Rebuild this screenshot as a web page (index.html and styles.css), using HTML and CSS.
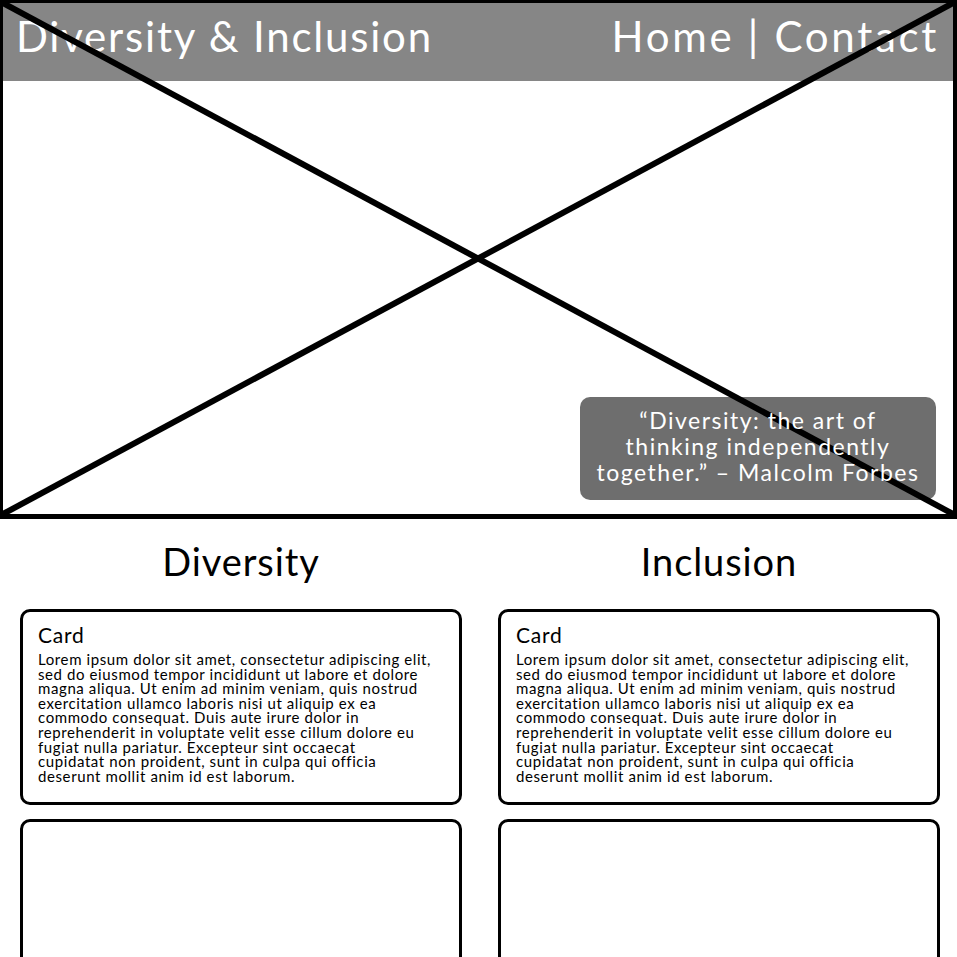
FILE: index.html
```html
<!DOCTYPE html>
<html lang="en">
<head>
<meta charset="UTF-8">
<meta name="viewport" content="width=device-width, initial-scale=1.0">
<title>Diversity &amp; Inclusion</title>
<link rel="stylesheet" href="styles.css">
</head>
<body>

<div class="hero">
    <header class="topbar">
        <span class="brand">Diversity &amp; Inclusion</span>
        <nav class="nav">Home | Contact</nav>
    </header>
    <div class="hero-body">
        <div class="quote">“Diversity: the art of thinking independently together.” – Malcolm Forbes</div>
    </div>
    <!-- image placeholder cross -->
    <svg class="placeholder-x" viewBox="0 0 100 100" preserveAspectRatio="none">
        <line x1="0" y1="0" x2="100" y2="100" />
        <line x1="100" y1="0" x2="0" y2="100" />
    </svg>
</div>

<div class="columns">
    <div class="column">
        <h2>Diversity</h2>
        <div class="card">
            <h3>Card</h3>
            <p>Lorem ipsum dolor sit amet, consectetur adipiscing elit,<br>
            sed do eiusmod tempor incididunt ut labore et dolore<br>
            magna aliqua. Ut enim ad minim veniam, quis nostrud<br>
            exercitation ullamco laboris nisi ut aliquip ex ea<br>
            commodo consequat. Duis aute irure dolor in<br>
            reprehenderit in voluptate velit esse cillum dolore eu<br>
            fugiat nulla pariatur. Excepteur sint occaecat<br>
            cupidatat non proident, sunt in culpa qui officia<br>
            deserunt mollit anim id est laborum.</p>
        </div>
        <div class="card empty"></div>
    </div>
    <div class="column">
        <h2>Inclusion</h2>
        <div class="card">
            <h3>Card</h3>
            <p>Lorem ipsum dolor sit amet, consectetur adipiscing elit,<br>
            sed do eiusmod tempor incididunt ut labore et dolore<br>
            magna aliqua. Ut enim ad minim veniam, quis nostrud<br>
            exercitation ullamco laboris nisi ut aliquip ex ea<br>
            commodo consequat. Duis aute irure dolor in<br>
            reprehenderit in voluptate velit esse cillum dolore eu<br>
            fugiat nulla pariatur. Excepteur sint occaecat<br>
            cupidatat non proident, sunt in culpa qui officia<br>
            deserunt mollit anim id est laborum.</p>
        </div>
        <div class="card empty"></div>
    </div>
</div>

</body>
</html>
```

FILE: styles.css
```css
body {
    font-family: Lato, "Open Sans", sans-serif;
    margin: 0;
    padding: 0;
    color: #000;
    background-color: white;
}

.hero {
    position: relative;
    height: 519px;
    box-sizing: border-box;
    border: solid #000;
    border-width: 3px 4px 5px 3px;
    display: flex;
    flex-direction: column;
}

.topbar {
    display: flex;
    justify-content: space-between;
    align-items: flex-start;
    height: 78px;
    box-sizing: border-box;
    padding: 9px 14px 0 13px;
    background-color: #868686;
    color: white;
    font-size: 42px;
    line-height: 48px;
}

.brand {
    letter-spacing: 1.8px;
}

.nav {
    letter-spacing: 2.7px;
}

.hero-body {
    flex: 1;
    display: flex;
    justify-content: flex-end;
    align-items: flex-end;
    padding: 0 17px 14px 0;
}

.placeholder-x {
    position: absolute;
    top: 0;
    left: 0;
    width: 100%;
    height: 100%;
    pointer-events: none;
}

.placeholder-x line {
    stroke: #000;
    stroke-width: 6;
    vector-effect: non-scaling-stroke;
}

.quote {
    position: relative;
    z-index: 1;
    width: 356px;
    box-sizing: border-box;
    padding: 10px 15px 15px;
    background-color: rgba(0, 0, 0, 0.57);
    border-radius: 10px;
    color: white;
    text-align: center;
    font-size: 23px;
    line-height: 26px;
    letter-spacing: 1.5px;
}

.columns {
    display: grid;
    grid-template-columns: 1fr 1fr;
    column-gap: 36px;
    padding: 0 17px 0 20px;
}

.column h2 {
    margin: 20px 0 26px;
    text-align: center;
    font-weight: normal;
    font-size: 38px;
    line-height: 44px;
    letter-spacing: 0.9px;
}

.card {
    border: 3px solid #000;
    border-radius: 10px;
    padding: 12px 15px 19px;
    margin-bottom: 14px;
}

.card h3 {
    margin: 0;
    font-weight: normal;
    font-size: 21px;
    line-height: 22px;
    letter-spacing: 0.8px;
}

.card p {
    margin: 6px 0 0;
    font-size: 15px;
    line-height: 14.6px;
    letter-spacing: 0.6px;
}

.card.empty {
    height: 200px;
}
```
